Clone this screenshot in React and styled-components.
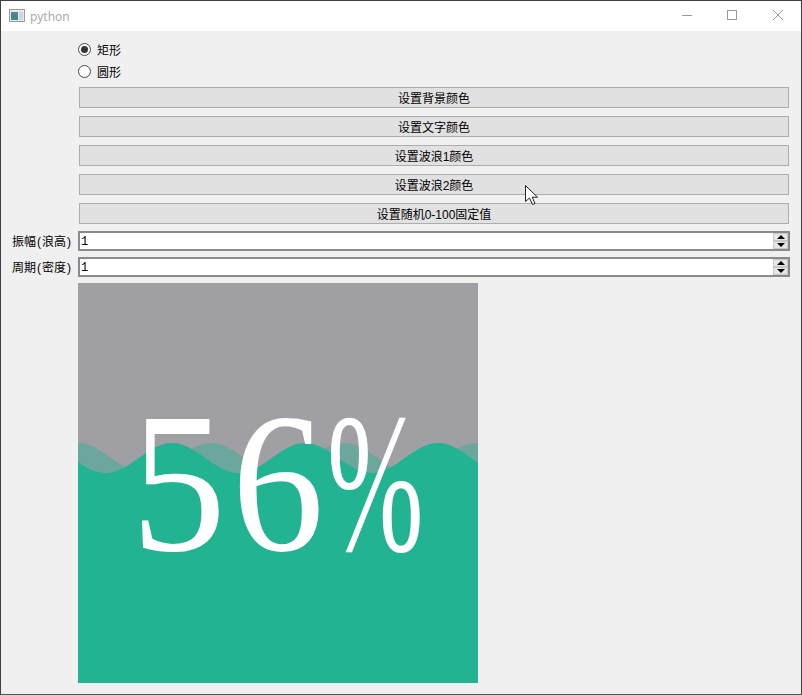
import React from "react";
import styled, { createGlobalStyle } from "styled-components";

const Global = createGlobalStyle`
  html, body { margin: 0; padding: 0; background: #f0f0f0; }
  * { box-sizing: border-box; }
`;

const uiFont = `"Liberation Sans", "Noto Sans CJK SC", sans-serif`;

const Window = styled.div`
  position: relative;
  width: 802px;
  height: 695px;
  overflow: hidden;
  background: #f0f0f0;
  border: 1px solid #3c3f46;
  border-bottom-color: #57555a;
  font: 12px ${uiFont};
  color: #000;
`;

const TitleBar = styled.div`
  display: flex;
  align-items: center;
  height: 30px;
  background: #fff;
  padding-left: 8px;
`;

const AppIcon = styled.svg`
  width: 16px;
  height: 16px;
  margin-right: 5px;
`;

const Title = styled.span`
  flex: 1;
  font: 12px "Open Sans", sans-serif;
  color: #a2a6ab;
`;

const Controls = styled.div`
  display: flex;
  height: 30px;
`;

const ControlBtn = styled.svg`
  width: 46px;
  height: 30px;
`;

const Form = styled.div`
  display: flex;
  flex-direction: column;
`;

const RadioGroup = styled.div`
  display: flex;
  flex-direction: column;
  padding: 7px 0 0 77px;
`;

const RadioRow = styled.label`
  display: flex;
  align-items: center;
  height: 22px;
  gap: 6px;
`;

const RadioMark = styled.span`
  display: flex;
  align-items: center;
  justify-content: center;
  width: 13px;
  height: 13px;
  border: 1px solid #4a4a4a;
  border-radius: 50%;
  background: #fff;
  &::after {
    content: "";
    width: 7px;
    height: 7px;
    border-radius: 50%;
    background: ${p => (p.$checked ? "#333" : "transparent")};
  }
`;

const Buttons = styled.div`
  display: flex;
  flex-direction: column;
  gap: 8px;
  margin: 5px 0 0 78px;
  width: 710px;
`;

const ActionButton = styled.button`
  height: 21px;
  padding: 0;
  border: 1px solid #adadad;
  background: #e1e1e1;
  font: 12px ${uiFont};
  color: #000;
`;

const Fields = styled.div`
  display: flex;
  flex-direction: column;
  gap: 6px;
  margin-top: 7px;
`;

const FieldRow = styled.div`
  display: grid;
  grid-template-columns: 77px 712px;
  align-items: center;
`;

const FieldLabel = styled.label`
  text-align: right;
  padding: 0 6px 1px 0;
  white-space: nowrap;
`;

const Paren = styled.span`
  display: inline-block;
  width: 6px;
  text-align: center;
`;

const SpinBox = styled.div`
  display: flex;
  height: 20px;
  border: 2px solid #8a8a8a;
  background: #fff;
`;

const SpinInput = styled.input`
  flex: 1;
  min-width: 0;
  border: 0;
  outline: 0;
  padding: 1px 0 0 1px;
  background: transparent;
  font: 12px "Liberation Mono", monospace;
  color: #000;
`;

const SpinButtons = styled.div`
  display: flex;
  flex-direction: column;
  width: 15px;
`;

const SpinButton = styled.div`
  flex: 1;
  display: flex;
  align-items: center;
  justify-content: center;
  background: #e6e6e6;
  border: 1px solid #c8c8c8;
  &::after {
    content: "";
    border-left: 4px solid transparent;
    border-right: 4px solid transparent;
    ${p => (p.$down ? "border-top: 4px solid #000;" : "border-bottom: 4px solid #000;")}
  }
`;

const WaveBox = styled.div`
  position: relative;
  display: flex;
  align-items: center;
  justify-content: center;
  width: 400px;
  height: 400px;
  margin: 6px 0 0 77px;
  background: #a09fa4;
  overflow: hidden;
`;

const WaveSvg = styled.svg`
  position: absolute;
  inset: 0;
`;

const Percent = styled.div`
  position: relative;
  display: flex;
  width: 304px;
  font: 200px/200px "Liberation Serif", serif;
  color: #fff;
  margin-left: 10px;
`;

const Glyph = styled.span`
  display: block;
  width: ${p => p.$slot}px;
  transform: scaleX(${p => p.$scale});
  transform-origin: 0 50%;
`;

const Cursor = styled.svg`
  position: absolute;
  left: 523px;
  top: 183px;
  width: 16px;
  height: 22px;
`;

const wave = (crest, opacity) => {
  let d = "M0 400";
  for (let x = 0; x <= 400; x += 2) {
    const y = 175 - 15 * Math.cos(((x - crest) / 133) * 2 * Math.PI);
    d += ` L${x} ${y.toFixed(2)}`;
  }
  d += " L400 400 Z";
  return <path d={d} fill="#22b392" fillOpacity={opacity} />;
};

const labels = ["设置背景颜色", "设置文字颜色", "设置波浪1颜色", "设置波浪2颜色", "设置随机0-100固定值"];

const Field = ({ a, b }) => (
  <FieldRow>
    <FieldLabel>{a}<Paren>(</Paren>{b}<Paren>)</Paren></FieldLabel>
    <SpinBox>
      <SpinInput value="1" readOnly />
      <SpinButtons>
        <SpinButton />
        <SpinButton $down />
      </SpinButtons>
    </SpinBox>
  </FieldRow>
);

export default function App() {
  return (
    <Window>
      <Global />
      <TitleBar>
        <AppIcon viewBox="0 0 16 16">
          <rect x="0.5" y="1.5" width="15" height="12" fill="#e8e8e8" stroke="#9b9b9b" />
          <rect x="2" y="4" width="7" height="8" fill="#3f8a87" />
          <rect x="2" y="4" width="7" height="3" fill="#5a7f9c" />
          <rect x="10" y="4" width="4" height="8" fill="#cfd6da" />
        </AppIcon>
        <Title>python</Title>
        <Controls>
          <ControlBtn viewBox="0 0 46 30">
            <path d="M19 14.5H29" stroke="#999" fill="none" />
          </ControlBtn>
          <ControlBtn viewBox="0 0 46 30">
            <rect x="18.5" y="9.5" width="9" height="9" stroke="#999" fill="none" />
          </ControlBtn>
          <ControlBtn viewBox="0 0 46 30">
            <path d="M18 9L28 19M28 9L18 19" stroke="#999" fill="none" />
          </ControlBtn>
        </Controls>
      </TitleBar>
      <Form>
        <RadioGroup>
          <RadioRow><RadioMark $checked />矩形</RadioRow>
          <RadioRow><RadioMark />圆形</RadioRow>
        </RadioGroup>
        <Buttons>
          {labels.map(l => <ActionButton key={l}>{l}</ActionButton>)}
        </Buttons>
        <Fields>
          <Field a="振幅" b="浪高" />
          <Field a="周期" b="密度" />
        </Fields>
        <WaveBox>
          <WaveSvg width="400" height="400" viewBox="0 0 400 400">
            {wave(0, 0.42)}
            {wave(94, 1)}
          </WaveSvg>
          <Percent>
            <Glyph $slot={101} $scale={0.95}>5</Glyph>
            <Glyph $slot={95} $scale={0.92}>6</Glyph>
            <Glyph $slot={100} $scale={0.58}>%</Glyph>
          </Percent>
        </WaveBox>
      </Form>
      <Cursor viewBox="0 0 16 22">
        <path d="M1.5 1.5V17.5L5.5 14L8.5 20.5L11 19.5L8.2 13.2H13.5Z" fill="#fff" stroke="#222" strokeWidth="1" strokeLinejoin="round" />
      </Cursor>
    </Window>
  );
}
